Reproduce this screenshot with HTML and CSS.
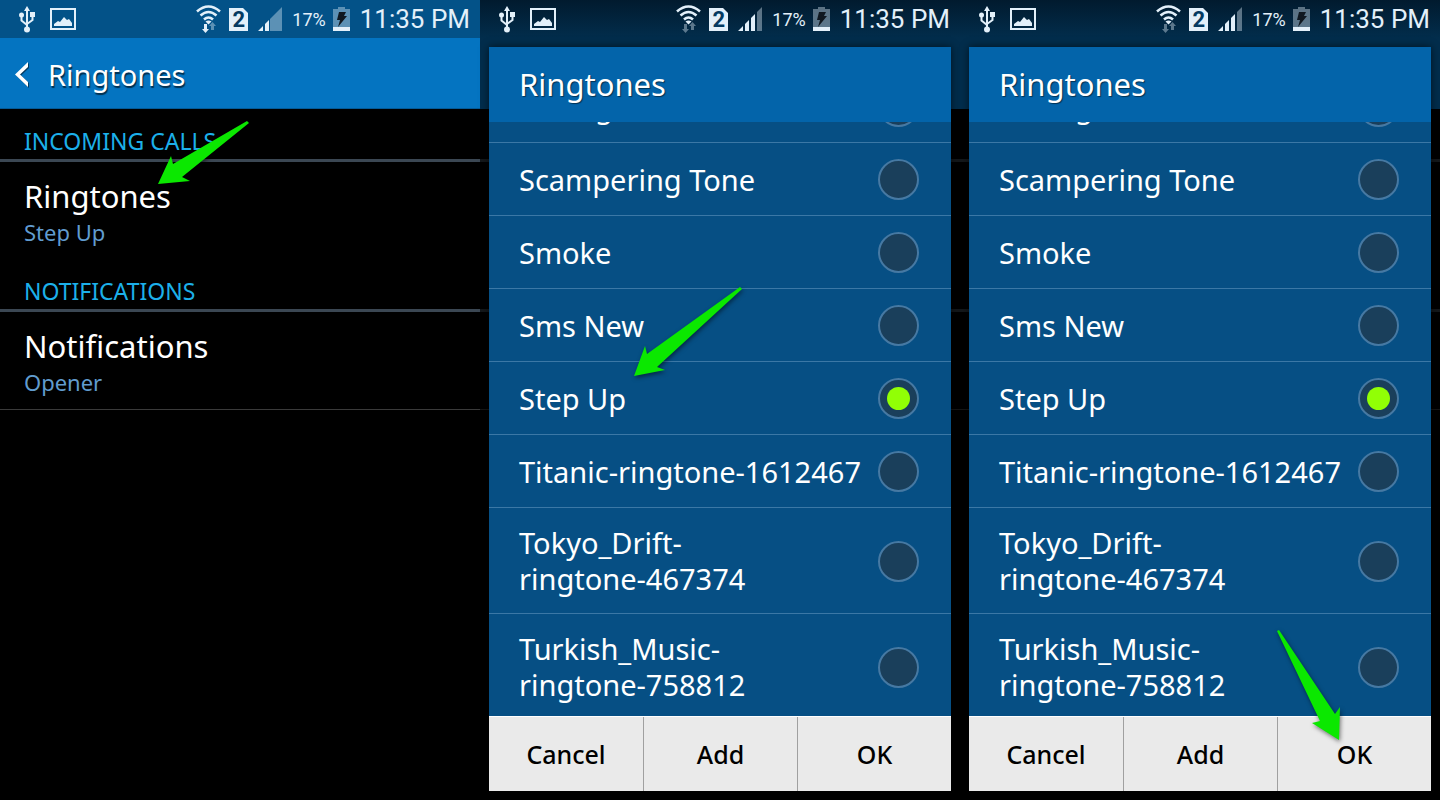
FILE: index.html
```html
<!DOCTYPE html>
<html lang="en">
<head>
    <meta charset="UTF-8">
    <meta name="viewport" content="width=device-width, initial-scale=1.0">
    <title>Ringtones</title>
    <link rel="stylesheet" href="styles.css">
</head>
<body>
    <!-- Shared icons -->
    <svg class="sprite" aria-hidden="true">
        <symbol id="icon-usb" viewBox="0 0 16 27">
            <path d="M8 0l3 5H5z"/>
            <path d="M8 4v19M8 19L2.500 14.500V10M8 18l5.500-4V9" fill="none" stroke="currentColor" stroke-width="2"/>
            <circle cx="2.500" cy="9" r="2.500"/>
            <rect x="11" y="6" width="5" height="5"/>
            <circle cx="8" cy="23.500" r="3"/>
        </symbol>
        <symbol id="icon-image" viewBox="0 0 26 22">
            <rect x="1" y="1" width="24" height="20" fill="none" stroke="currentColor" stroke-width="2"/>
            <path d="M4 18v-2l4-3 2 1 4-5 3 3 2-1 3 4v3z"/>
        </symbol>
        <symbol id="icon-wifi" viewBox="0 0 25 28">
            <g fill="none" stroke="currentColor" stroke-width="2.600">
                <path d="M1 6.500q11.500-10 23 0"/>
                <path d="M4.500 10.500q8-7 16 0"/>
                <path d="M8 14.500q4.500-4 9 0"/>
            </g>
            <path d="M9.500 16.500q3-2 6 0l-3 3z"/>
        </symbol>
        <symbol id="icon-sim" viewBox="0 0 19 23">
            <path d="M0 0h14l5 5v18H0z"/>
        </symbol>
        <symbol id="icon-battery" viewBox="0 0 17 24">
            <path d="M5 0h7v2h5v22H0V2h5z" opacity=".4"/>
            <path d="M0 20h17v4H0z"/>
            <path d="M6 5h7l-2 4h3L5 20l2-7H4z" fill="#101820"/>
        </symbol>
    </svg>

    <main class="screens">
        <section class="phone">
            <header class="status-bar">
                <svg class="icon-usb"><use href="#icon-usb"/></svg>
                <svg class="icon-image"><use href="#icon-image"/></svg>
                <span class="spacer"></span>
                <svg class="icon-wifi" viewBox="0 0 25 28">
                    <use href="#icon-wifi"/>
                    <path d="M8 19h3v5h2l-3.500 4L6 24h2z"/>
                    <path d="M15 25v-4h-2l3.500-4 3.500 4h-2v4z" opacity=".4"/>
                </svg>
                <span class="sim"><svg><use href="#icon-sim"/></svg><b>2</b></span>
                <svg class="icon-signal" viewBox="0 0 24 24">
                    <path d="M12 24V12L24 0v24z" opacity=".4"/>
                    <path d="M0 24l5-5v5zM7 24v-7l4-4v11z"/>
                </svg>
                <span class="charge">17%</span>
                <svg class="icon-battery"><use href="#icon-battery"/></svg>
                <time class="clock">11:35 PM</time>
            </header>
            <div class="app-bar">
                <button class="back" type="button" aria-label="Back">
                    <svg viewBox="0 0 14 25"><path d="M13 0v5L5 12.500l8 7.500v5L0 12.500z"/></svg>
                </button>
                <h1>Ringtones</h1>
            </div>
            <h2 class="section-title">INCOMING CALLS</h2>
            <button class="pref" type="button">
                <span class="pref-name">Ringtones</span>
                <span class="pref-value">Step Up</span>
            </button>
            <h2 class="section-title">NOTIFICATIONS</h2>
            <button class="pref pref-last" type="button">
                <span class="pref-name">Notifications</span>
                <span class="pref-value">Opener</span>
            </button>
            <svg class="arrow arrow-setting" viewBox="0 0 96 68">
                <path d="M91 2L93 4 26 58 34 62 2 65 15 37 17 45z"/>
            </svg>
        </section>

        <section class="phone dimmed">
            <header class="status-bar">
                <svg class="icon-usb"><use href="#icon-usb"/></svg>
                <svg class="icon-image"><use href="#icon-image"/></svg>
                <span class="spacer"></span>
                <svg class="icon-wifi" viewBox="0 0 25 28">
                    <use href="#icon-wifi"/>
                    <path d="M8 19h3v5h2l-3.500 4L6 24h2zM15 25v-4h-2l3.500-4 3.500 4h-2v4z" opacity=".4"/>
                </svg>
                <span class="sim"><svg><use href="#icon-sim"/></svg><b>2</b></span>
                <svg class="icon-signal" viewBox="0 0 24 24">
                    <path d="M19 24V5l5-5v24z" opacity=".4"/>
                    <path d="M0 24l5-5v5zM7 24v-7l4-4v11zM13 24V11l4-4v17z"/>
                </svg>
                <span class="charge">17%</span>
                <svg class="icon-battery"><use href="#icon-battery"/></svg>
                <time class="clock">11:35 PM</time>
            </header>
            <form class="dialog">
                <h2 class="dialog-title">Ringtones</h2>
                <div class="tones">
                    <label class="tone tone-scrolled"><span>Rolling Tone</span><input type="radio" name="tone"></label>
                    <label class="tone"><span>Scampering Tone</span><input type="radio" name="tone"></label>
                    <label class="tone"><span>Smoke</span><input type="radio" name="tone"></label>
                    <label class="tone"><span>Sms New</span><input type="radio" name="tone"></label>
                    <label class="tone"><span>Step Up</span><input type="radio" name="tone" checked></label>
                    <label class="tone"><span>Titanic-ringtone-1612467</span><input type="radio" name="tone"></label>
                    <label class="tone"><span>Tokyo_Drift-<br>ringtone-467374</span><input type="radio" name="tone"></label>
                    <label class="tone"><span>Turkish_Music-<br>ringtone-758812</span><input type="radio" name="tone"></label>
                </div>
                <div class="actions">
                    <button type="button">Cancel</button>
                    <button type="button">Add</button>
                    <button type="button">OK</button>
                </div>
            </form>
            <svg class="arrow arrow-tone" viewBox="0 0 114 96">
                <path d="M108 2L110 4 25 82 33 85 2 91 13 61 15 69z"/>
            </svg>
        </section>

        <section class="phone dimmed">
            <header class="status-bar">
                <svg class="icon-usb"><use href="#icon-usb"/></svg>
                <svg class="icon-image"><use href="#icon-image"/></svg>
                <span class="spacer"></span>
                <svg class="icon-wifi" viewBox="0 0 25 28">
                    <use href="#icon-wifi"/>
                    <path d="M8 19h3v5h2l-3.500 4L6 24h2zM15 25v-4h-2l3.500-4 3.500 4h-2v4z" opacity=".4"/>
                </svg>
                <span class="sim"><svg><use href="#icon-sim"/></svg><b>2</b></span>
                <svg class="icon-signal" viewBox="0 0 24 24">
                    <path d="M19 24V5l5-5v24z" opacity=".4"/>
                    <path d="M0 24l5-5v5zM7 24v-7l4-4v11zM13 24V11l4-4v17z"/>
                </svg>
                <span class="charge">17%</span>
                <svg class="icon-battery"><use href="#icon-battery"/></svg>
                <time class="clock">11:35 PM</time>
            </header>
            <form class="dialog">
                <h2 class="dialog-title">Ringtones</h2>
                <div class="tones">
                    <label class="tone tone-scrolled"><span>Rolling Tone</span><input type="radio" name="tone"></label>
                    <label class="tone"><span>Scampering Tone</span><input type="radio" name="tone"></label>
                    <label class="tone"><span>Smoke</span><input type="radio" name="tone"></label>
                    <label class="tone"><span>Sms New</span><input type="radio" name="tone"></label>
                    <label class="tone"><span>Step Up</span><input type="radio" name="tone" checked></label>
                    <label class="tone"><span>Titanic-ringtone-1612467</span><input type="radio" name="tone"></label>
                    <label class="tone"><span>Tokyo_Drift-<br>ringtone-467374</span><input type="radio" name="tone"></label>
                    <label class="tone"><span>Turkish_Music-<br>ringtone-758812</span><input type="radio" name="tone"></label>
                </div>
                <div class="actions">
                    <button type="button">Cancel</button>
                    <button type="button">Add</button>
                    <button type="button">OK</button>
                </div>
            </form>
            <svg class="arrow arrow-ok" viewBox="0 0 70 118">
                <path d="M2 3L4 2 60 86 65 79 64 112 37 95 45 93z"/>
            </svg>
        </section>
    </main>
</body>
</html>
```
FILE: styles.css
```css
* {
    box-sizing: border-box;
}
body {
    margin: 0;
    background: #000;
    color: #fff;
    font-family: "Noto Sans", sans-serif;
}
h1, h2 {
    margin: 0;
    font-weight: 400;
}
button {
    margin: 0;
    border: none;
    background: none;
    color: inherit;
    font-family: inherit;
    cursor: pointer;
}
svg {
    display: block;
    flex: none;
    fill: currentColor;
}
.sprite {
    display: none;
}
.screens {
    display: grid;
    grid-template-columns: repeat(3, 1fr);
    min-height: 100vh;
}
.phone {
    position: relative;
    display: flex;
    flex-direction: column;
    min-width: 0;
    background: #000;
}

/* Status bar */
.status-bar {
    display: flex;
    align-items: center;
    gap: 10px;
    height: 38px;
    padding: 0 10px 0 19px;
    background: #035288;
    color: #e3f0fa;
    font-family: Roboto, sans-serif;
}
.spacer {
    flex: 1;
}
.icon-usb {
    width: 16px;
    height: 27px;
    margin-right: 5px;
}
.icon-image {
    width: 26px;
    height: 22px;
}
.icon-wifi {
    width: 25px;
    height: 28px;
    margin-right: -2px;
}
.sim {
    position: relative;
    width: 19px;
    height: 23px;
}
.sim svg {
    width: 19px;
    height: 23px;
}
.sim b {
    position: absolute;
    inset: 0;
    color: #043a61;
    font-size: 22px;
    line-height: 24px;
    text-align: center;
}
.icon-signal {
    width: 24px;
    height: 24px;
}
.charge {
    margin-right: -3px;
    font-size: 18px;
}
.icon-battery {
    width: 17px;
    height: 24px;
}
.clock {
    font-size: 26px;
}

/* Settings screen */
.app-bar {
    display: flex;
    align-items: center;
    gap: 19px;
    height: 71px;
    padding: 2px 0 0 15px;
    background: #0474c1;
    border-bottom: 1px solid #035a98;
}
.app-bar h1 {
    font-size: 29px;
    text-shadow: 1px 2px 1px rgba(0, 0, 0, 0.6);
}
.back {
    padding: 0;
}
.back svg {
    width: 14px;
    height: 25px;
    filter: drop-shadow(1px 1px 0 rgba(0, 0, 0, 0.5));
}
.section-title {
    height: 53px;
    padding: 16px 24px 0;
    border-bottom: 3px solid #3b4753;
    color: #1cb0ea;
    font-size: 23px;
    line-height: 32px;
}
.pref {
    display: flex;
    flex-direction: column;
    height: 97px;
    padding: 13px 24px 0;
    text-align: left;
}
.pref-last {
    height: 98px;
    border-bottom: 1px solid #3a3a3a;
}
.pref-name {
    font-size: 31px;
    line-height: 42px;
}
.pref-value {
    color: #619ccf;
    font-size: 22px;
    line-height: 30px;
}

/* Dialog screens, with the settings page dimmed behind */
.dimmed {
    background:
        linear-gradient(#14181b, #14181b) 0 159px / 100% 3px no-repeat,
        linear-gradient(#14181b, #14181b) 0 309px / 100% 3px no-repeat,
        linear-gradient(#161616, #161616) 0 409px / 100% 1px no-repeat,
        linear-gradient(#022d4c, #022d4c) 0 0 / 100% 109px no-repeat,
        #000;
}
.dimmed .status-bar {
    background: linear-gradient(#011a2e, #022d4c);
}
.dialog {
    position: absolute;
    inset: 47px 9px 9px;
    display: flex;
    flex-direction: column;
    background: #064f84;
    box-shadow: 0 0 8px rgba(0, 0, 0, 0.6);
}
.dialog-title {
    flex: none;
    height: 75px;
    padding-left: 30px;
    background: #0364aa;
    font-size: 31px;
    line-height: 74px;
    text-shadow: 1px 1px 1px rgba(0, 0, 0, 0.5);
}
.tones {
    flex: 1;
    min-height: 0;
    overflow: hidden;
}
.tone {
    display: flex;
    align-items: center;
    justify-content: space-between;
    min-height: 73px;
    padding: 17px 32px 16px 30px;
    border-bottom: 1px solid #3b78a6;
    font-size: 29px;
    line-height: 36px;
    white-space: nowrap;
}
.tone input {
    display: grid;
    place-items: center;
    flex: none;
    width: 41px;
    height: 41px;
    margin: -4px 0;
    appearance: none;
    background: #1a3f5b;
    border: 2px solid #4679a3;
    border-radius: 50%;
}
.tone input:checked::before {
    content: "";
    width: 23px;
    height: 23px;
    background: #91ff05;
    border-radius: 50%;
}
.tone-scrolled {
    margin-top: -52px;
}
.actions {
    display: grid;
    grid-template-columns: repeat(3, 1fr);
    flex: none;
    height: 75px;
    background: #eaeaea;
    border-top: 1px solid #fff;
}
.actions button {
    color: #000;
    font-size: 25px;
    font-weight: 500;
}
.actions button + button {
    border-left: 1px solid #a0a0a0;
}

/* Pointer arrows */
.arrow {
    position: absolute;
    fill: #0be800;
    filter: drop-shadow(1px 2px 2px rgba(0, 0, 0, 0.5));
    pointer-events: none;
}
.arrow-setting {
    top: 119px;
    left: 156px;
    width: 96px;
    height: 68px;
}
.arrow-tone {
    top: 285px;
    left: 152px;
    width: 114px;
    height: 96px;
}
.arrow-ok {
    top: 628px;
    left: 315px;
    width: 70px;
    height: 118px;
}
```
